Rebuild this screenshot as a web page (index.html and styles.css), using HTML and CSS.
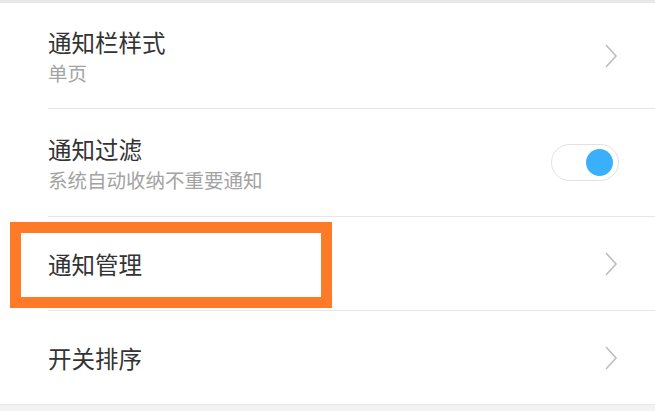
FILE: index.html
```html
<!DOCTYPE html>
<html lang="zh-CN">
<head>
<meta charset="utf-8">
<link rel="stylesheet" href="styles.css">
</head>
<body>
<div class="top-bar"></div>
<ul class="list">
  <li class="row row-first">
    <div class="text">
      <div class="title">通知栏样式</div>
      <div class="sub">单页</div>
    </div>
    <svg class="chev" width="16" height="26" viewBox="0 0 16 26"><polyline points="3,2 13,13 3,24" fill="none" stroke="#bdbdbd" stroke-width="1.6"/></svg>
  </li>
  <li class="row row-tall">
    <div class="text">
      <div class="title">通知过滤</div>
      <div class="sub">系统自动收纳不重要通知</div>
    </div>
    <div class="toggle"><span class="knob"></span></div>
  </li>
  <li class="row row-short highlighted">
    <div class="text">
      <div class="title">通知管理</div>
    </div>
    <svg class="chev" width="16" height="26" viewBox="0 0 16 26"><polyline points="3,2 13,13 3,24" fill="none" stroke="#bdbdbd" stroke-width="1.6"/></svg>
    <div class="mark"></div>
  </li>
  <li class="row row-short last">
    <div class="text">
      <div class="title">开关排序</div>
    </div>
    <svg class="chev" width="16" height="26" viewBox="0 0 16 26"><polyline points="3,2 13,13 3,24" fill="none" stroke="#bdbdbd" stroke-width="1.6"/></svg>
  </li>
</ul>
<div class="footer"></div>
</body>
</html>
```
FILE: styles.css
```css
* { box-sizing: border-box; }
html, body {
  margin: 0;
  padding: 0;
  background: #ffffff;
  font-family: "Noto Sans CJK SC", "Noto Sans", sans-serif;
  width: 655px;
  height: 411px;
  overflow: hidden;
}
.top-bar {
  height: 3px;
  background: #e8e8e8;
}
.list {
  list-style: none;
  margin: 0;
  padding: 0 0 0 48px;
}
.row {
  position: relative;
  display: flex;
  align-items: center;
  justify-content: space-between;
  border-bottom: 1px solid #e6e6e6;
  padding-right: 36px;
}
.row-first { height: 106px; }
.row-tall { height: 108px; }
.row-short { height: 94px; }
.row.last {
  margin-left: -48px;
  padding-left: 48px;
}
.text {
  display: flex;
  flex-direction: column;
}
.title {
  font-size: 23.5px;
  line-height: 34px;
  color: #333333;
}
.sub {
  font-size: 19.5px;
  line-height: 28px;
  color: #a3a3a3;
}
.chev { display: block; }
.toggle {
  width: 68px;
  height: 37px;
  border: 1.5px solid #e2e2e2;
  border-radius: 19px;
  background: #fff;
  display: flex;
  align-items: center;
  justify-content: flex-end;
  padding-right: 5px;
}
.knob {
  width: 27px;
  height: 27px;
  border-radius: 50%;
  background: #3aaffa;
}
.mark {
  position: absolute;
  left: -38px;
  top: 5px;
  width: 322px;
  height: 86px;
  border: 11px solid #fc7a28;
}
.footer {
  height: 7px;
  background: #f3f3f3;
}
```
